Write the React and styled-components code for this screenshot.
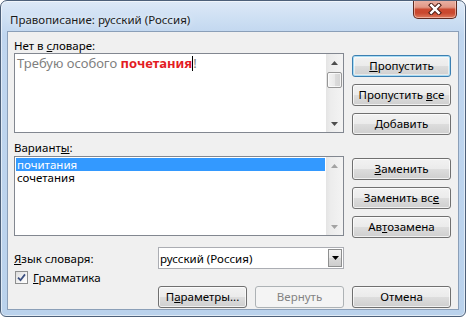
import React from "react";
import styled, { createGlobalStyle, css } from "styled-components";

const Global = createGlobalStyle`
  html, body { margin: 0; padding: 0; background: #ffffff; }
  body { font-family: "Noto Sans", "Segoe UI", sans-serif; font-size: 11.5px; color: #000; }
  * { box-sizing: border-box; }
`;

const Window = styled.div`
  width: 466px;
  height: 317px;
  border: 1px solid #4d6079;
  border-radius: 7px 7px 6px 6px;
  background: linear-gradient(180deg, #dde9f7 0px, #cddff3 18px, #c0d6ef 34px, #bad2ec 100%);
  box-shadow: inset 0 0 0 1px rgba(255, 255, 255, 0.55);
  display: flex;
  flex-direction: column;
  overflow: hidden;
`;

const TitleBar = styled.div`
  height: 30px;
  flex: none;
  display: flex;
  justify-content: space-between;
  align-items: flex-start;
`;

const Title = styled.div`
  padding: 11px 0 0 9px;
  line-height: 16px;
  font-size: 11.5px;
  color: #1a1a1a;
  text-shadow: 0 0 6px rgba(255, 255, 255, 0.9);
`;

const CloseButton = styled.div`
  width: 44px;
  height: 19px;
  margin: -1px 8px 0 0;
  border: 1px solid #5e2a21;
  border-top: none;
  border-radius: 0 0 5px 5px;
  background: linear-gradient(180deg, #eab3a6 0%, #e19886 40%, #cb4a31 52%, #c9472e 72%, #dd7a5e 100%);
  box-shadow: inset 0 0 0 1px rgba(255, 220, 210, 0.55);
  display: flex;
  align-items: center;
  justify-content: center;
`;

const Client = styled.div`
  flex: 1;
  margin: 0 6px 6px 6px;
  background: #f0f0f0;
  border: 1px solid #8b9fb8;
  padding: 6px 7px 0 6px;
  display: flex;
  flex-direction: column;
`;

const Section = styled.div`
  display: grid;
  grid-template-columns: 330px 99px;
  column-gap: 8px;
  margin-top: ${(p) => p.$top || 0}px;
`;

const Column = styled.div`
  display: flex;
  flex-direction: column;
`;

const Label = styled.div`
  height: 15px;
  line-height: 15px;
  margin-bottom: ${(p) => p.$gap || 0}px;
  white-space: nowrap;
`;

const Key = styled.span`
  text-decoration: underline;
  text-underline-offset: 1px;
`;

const Box = styled.div`
  height: ${(p) => p.$h}px;
  background: #ffffff;
  border: 1px solid #828790;
  display: flex;
`;

const EditArea = styled.div`
  flex: 1;
  padding: 1px 0 0 2px;
  font-size: 13px;
  line-height: 16px;
  color: #7f7f7f;
  white-space: nowrap;
`;

const Misspelled = styled.span`
  color: #e31b23;
  font-weight: bold;
`;

const Caret = styled.span`
  display: inline-block;
  width: 1px;
  height: 15px;
  background: #000;
  vertical-align: -3px;
`;

const ListArea = styled.div`
  flex: 1;
  padding: 1px 1px 0 1px;
`;

const ListItem = styled.div`
  height: 13px;
  line-height: 13px;
  padding-left: 1px;
  white-space: nowrap;
  ${(p) =>
    p.$selected &&
    css`
      background: #3399ff;
      color: #ffffff;
    `}
`;

const ScrollBar = styled.div`
  width: 17px;
  display: flex;
  flex-direction: column;
  background: linear-gradient(90deg, #e4e4e4 0%, #ececec 25%, #f1f1f1 75%, #f3f3f3 100%);
`;

const ScrollArrow = styled.div`
  height: 17px;
  display: flex;
  align-items: center;
  justify-content: center;
`;

const Track = styled.div`
  flex: 1;
  padding: 1px 1px 0 1px;
`;

const Thumb = styled.div`
  height: 16px;
  border: 1px solid #979797;
  border-radius: 2px;
  background: linear-gradient(90deg, #f4f4f4 0%, #e9e9e9 50%, #dcdcdc 51%, #d4d4d4 100%);
  box-shadow: inset 0 0 0 1px rgba(255, 255, 255, 0.75);
`;

const ButtonStack = styled.div`
  display: flex;
  flex-direction: column;
  gap: 7px;
  padding-top: ${(p) => p.$top}px;
`;

const Button = styled.div`
  height: 22px;
  border: 1px solid #707070;
  border-radius: 3px;
  background: linear-gradient(180deg, #f2f2f2 0%, #ebebeb 50%, #dddddd 51%, #cfcfcf 100%);
  box-shadow: inset 0 0 0 1px rgba(255, 255, 255, 0.7);
  display: flex;
  align-items: center;
  justify-content: center;
  white-space: nowrap;
  line-height: 15px;
  padding-bottom: 1px;
  grid-column: ${(p) => p.$col || "auto"};
  ${(p) =>
    p.$default &&
    css`
      border-color: #3c7fb1;
      box-shadow: inset 0 0 0 1px #a9dcf4, inset 0 0 0 2px rgba(255, 255, 255, 0.5);
    `}
  ${(p) =>
    p.$disabled &&
    css`
      border-color: #adb2b5;
      background: #f4f4f4;
      box-shadow: none;
      color: #838383;
    `}
`;

const Footer = styled.div`
  display: grid;
  grid-template-columns: 136px 89px 89px 99px;
  grid-template-rows: 22px 17px 22px;
  column-gap: 8px;
  margin-top: 9px;
`;

const FieldLabel = styled.div`
  grid-column: 1;
  display: flex;
  align-items: center;
  white-space: nowrap;
`;

const Combo = styled.div`
  grid-column: 2 / 4;
  background: #ffffff;
  border: 1px solid #abadb3;
  display: flex;
  align-items: center;
`;

const ComboText = styled.div`
  flex: 1;
  padding-left: 1px;
  white-space: nowrap;
`;

const ComboButton = styled.div`
  width: 14px;
  height: 18px;
  margin-right: 1px;
  border: 1px solid #8e8f8f;
  background: linear-gradient(180deg, #f4f4f4 0%, #e8e8e8 50%, #d9d9d9 51%, #cdcdcd 100%);
  display: flex;
  align-items: center;
  justify-content: center;
`;

const CheckRow = styled.div`
  grid-column: 1 / 3;
  display: flex;
  align-items: center;
  gap: 5px;
  padding-left: 1px;
`;

const CheckBox = styled.div`
  width: 13px;
  height: 13px;
  border: 1px solid #8e8f8f;
  background: linear-gradient(135deg, #dcdcdc 0%, #f4f4f4 60%, #ffffff 100%);
  display: flex;
  align-items: center;
  justify-content: center;
`;

const Arrow = ({ dir, color }) => (
  <svg width="7" height="4" viewBox="0 0 7 4">
    <path d={dir === "up" ? "M3.5 0 L7 4 L0 4 Z" : "M0 0 L7 0 L3.5 4 Z"} fill={color} />
  </svg>
);

const CloseGlyph = () => (
  <svg width="14" height="12" viewBox="0 0 14 12">
    <path d="M3.2 2.2 L10.8 9.8 M10.8 2.2 L3.2 9.8" stroke="#4b1d15" strokeWidth="4.4" strokeLinecap="square" />
    <path d="M3.2 2.2 L10.8 9.8 M10.8 2.2 L3.2 9.8" stroke="#ffffff" strokeWidth="2.4" strokeLinecap="square" />
  </svg>
);

const Tick = () => (
  <svg width="9" height="9" viewBox="0 0 9 9">
    <path d="M1 4.6 L3.5 7.2 L8 1.4" stroke="#3b4f80" strokeWidth="1.8" fill="none" />
  </svg>
);

export default function App() {
  return (
    <>
      <Global />
      <Window>
        <TitleBar>
          <Title>Правописание: русский (Россия)</Title>
          <CloseButton>
            <CloseGlyph />
          </CloseButton>
        </TitleBar>
        <Client>
          <Section>
            <Column>
              <Label>
                Нет в <Key>с</Key>ловаре:
              </Label>
              <Box $h={80}>
                <EditArea>
                  Требую особого <Misspelled>почетания</Misspelled>
                  <Caret />!
                </EditArea>
                <ScrollBar>
                  <ScrollArrow>
                    <Arrow dir="up" color="#4d4d4d" />
                  </ScrollArrow>
                  <Track>
                    <Thumb />
                  </Track>
                  <ScrollArrow>
                    <Arrow dir="down" color="#4d4d4d" />
                  </ScrollArrow>
                </ScrollBar>
              </Box>
            </Column>
            <ButtonStack $top={17}>
              <Button $default>
                <span>
                  <Key>П</Key>ропустить
                </span>
              </Button>
              <Button>
                <span>
                  Пропустить <Key>в</Key>се
                </span>
              </Button>
              <Button>
                <span>
                  <Key>Д</Key>обавить
                </span>
              </Button>
            </ButtonStack>
          </Section>
          <Section $top={5}>
            <Column>
              <Label $gap={1}>
                Вариант<Key>ы</Key>:
              </Label>
              <Box $h={80}>
                <ListArea>
                  <ListItem $selected>почитания</ListItem>
                  <ListItem>сочетания</ListItem>
                </ListArea>
                <ScrollBar>
                  <ScrollArrow>
                    <Arrow dir="up" color="#a3a3a3" />
                  </ScrollArrow>
                  <Track />
                  <ScrollArrow>
                    <Arrow dir="down" color="#a3a3a3" />
                  </ScrollArrow>
                </ScrollBar>
              </Box>
            </Column>
            <ButtonStack $top={18}>
              <Button>
                <span>
                  <Key>З</Key>аменить
                </span>
              </Button>
              <Button>
                <span>
                  Заменить вс<Key>е</Key>
                </span>
              </Button>
              <Button>
                <span>
                  Ав<Key>т</Key>озамена
                </span>
              </Button>
            </ButtonStack>
          </Section>
          <Footer>
            <FieldLabel>
              <span>
                <Key>Я</Key>зык словаря:
              </span>
            </FieldLabel>
            <Combo>
              <ComboText>русский (Россия)</ComboText>
              <ComboButton>
                <Arrow dir="down" color="#000000" />
              </ComboButton>
            </Combo>
            <CheckRow>
              <CheckBox>
                <Tick />
              </CheckBox>
              <span>
                <Key>Г</Key>рамматика
              </span>
            </CheckRow>
            <Button $col={2}>
              <span>
                П<Key>а</Key>раметры...
              </span>
            </Button>
            <Button $col={3} $disabled>
              Вернуть
            </Button>
            <Button $col={4}>Отмена</Button>
          </Footer>
        </Client>
      </Window>
    </>
  );
}
